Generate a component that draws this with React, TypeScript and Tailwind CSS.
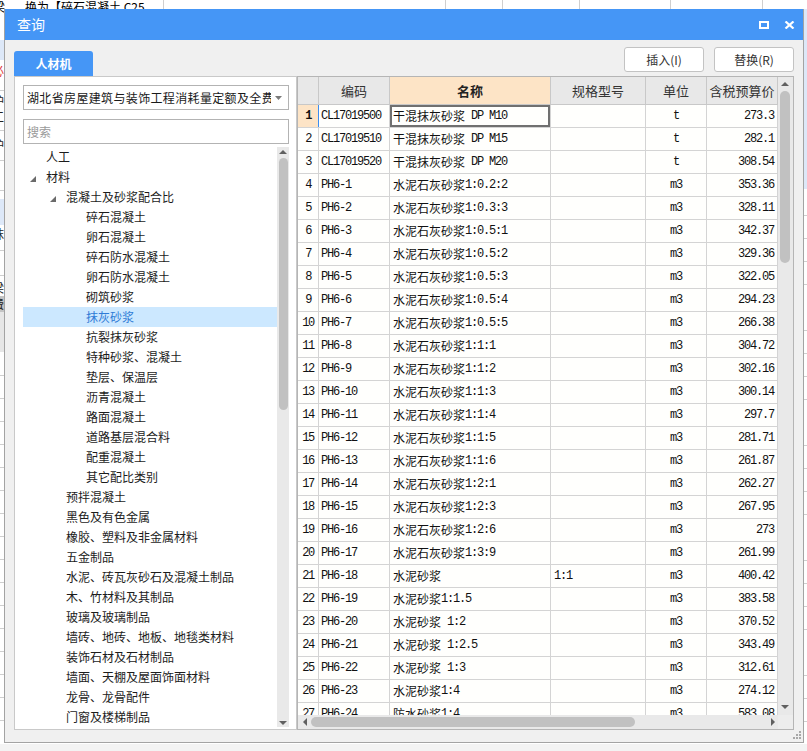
import React from "react";

const SANS = "font-['Noto_Sans_CJK_SC','Noto_Sans',sans-serif]";

const rows: [string, string, string, string, string][] = [
  ["CL17019500", "干混抹灰砂浆 DP M10", "", "t", "273.3"],
  ["CL17019510", "干混抹灰砂浆 DP M15", "", "t", "282.1"],
  ["CL17019520", "干混抹灰砂浆 DP M20", "", "t", "308.54"],
  ["PH6-1", "水泥石灰砂浆1:0.2:2", "", "m3", "353.36"],
  ["PH6-2", "水泥石灰砂浆1:0.3:3", "", "m3", "328.11"],
  ["PH6-3", "水泥石灰砂浆1:0.5:1", "", "m3", "342.37"],
  ["PH6-4", "水泥石灰砂浆1:0.5:2", "", "m3", "329.36"],
  ["PH6-5", "水泥石灰砂浆1:0.5:3", "", "m3", "322.05"],
  ["PH6-6", "水泥石灰砂浆1:0.5:4", "", "m3", "294.23"],
  ["PH6-7", "水泥石灰砂浆1:0.5:5", "", "m3", "266.38"],
  ["PH6-8", "水泥石灰砂浆1:1:1", "", "m3", "304.72"],
  ["PH6-9", "水泥石灰砂浆1:1:2", "", "m3", "302.16"],
  ["PH6-10", "水泥石灰砂浆1:1:3", "", "m3", "300.14"],
  ["PH6-11", "水泥石灰砂浆1:1:4", "", "m3", "297.7"],
  ["PH6-12", "水泥石灰砂浆1:1:5", "", "m3", "281.71"],
  ["PH6-13", "水泥石灰砂浆1:1:6", "", "m3", "261.87"],
  ["PH6-14", "水泥石灰砂浆1:2:1", "", "m3", "262.27"],
  ["PH6-15", "水泥石灰砂浆1:2:3", "", "m3", "267.95"],
  ["PH6-16", "水泥石灰砂浆1:2:6", "", "m3", "273"],
  ["PH6-17", "水泥石灰砂浆1:3:9", "", "m3", "261.99"],
  ["PH6-18", "水泥砂浆", "1:1", "m3", "400.42"],
  ["PH6-19", "水泥砂浆1:1.5", "", "m3", "383.58"],
  ["PH6-20", "水泥砂浆 1:2", "", "m3", "370.52"],
  ["PH6-21", "水泥砂浆 1:2.5", "", "m3", "343.49"],
  ["PH6-22", "水泥砂浆 1:3", "", "m3", "312.61"],
  ["PH6-23", "水泥砂浆1:4", "", "m3", "274.12"],
  ["PH6-24", "防水砂浆1:4", "", "m3", "583.08"],
];

const tree: [number, string, boolean][] = [
  [0, "人工", false],
  [0, "材料", true],
  [1, "混凝土及砂浆配合比", true],
  [2, "碎石混凝土", false],
  [2, "卵石混凝土", false],
  [2, "碎石防水混凝土", false],
  [2, "卵石防水混凝土", false],
  [2, "砌筑砂浆", false],
  [2, "抹灰砂浆", false],
  [2, "抗裂抹灰砂浆", false],
  [2, "特种砂浆、混凝土", false],
  [2, "垫层、保温层", false],
  [2, "沥青混凝土", false],
  [2, "路面混凝土", false],
  [2, "道路基层混合料", false],
  [2, "配重混凝土", false],
  [2, "其它配比类别", false],
  [1, "预拌混凝土", false],
  [1, "黑色及有色金属", false],
  [1, "橡胶、塑料及非金属材料", false],
  [1, "五金制品", false],
  [1, "水泥、砖瓦灰砂石及混凝土制品", false],
  [1, "木、竹材料及其制品", false],
  [1, "玻璃及玻璃制品", false],
  [1, "墙砖、地砖、地板、地毯类材料", false],
  [1, "装饰石材及石材制品", false],
  [1, "墙面、天棚及屋面饰面材料", false],
  [1, "龙骨、龙骨配件", false],
  [1, "门窗及楼梯制品", false],
];

function Mx({ t }: { t: string }) {
  const parts = t.split(/([\x00-\x7f]+)/).filter((s) => s.length > 0);
  return (
    <>
      {parts.map((s, i) =>
        /^[\x00-\x7f]+$/.test(s) ? (
          <span key={i} className="font-['Liberation_Mono',monospace] tracking-[-1.2px]">
            {s}
          </span>
        ) : (
          <span key={i}>{s}</span>
        )
      )}
    </>
  );
}

function Tri({ dir }: { dir: "up" | "down" | "left" | "right" }) {
  const pts =
    dir === "up"
      ? "0,4 4,0 8,4"
      : dir === "down"
      ? "0,0 8,0 4,4"
      : dir === "left"
      ? "4,0 4,8 0,4"
      : "0,0 0,8 4,4";
  const w = dir === "up" || dir === "down" ? 8 : 4;
  const h = dir === "up" || dir === "down" ? 4 : 8;
  return (
    <svg width={w} height={h} viewBox={`0 0 ${w} ${h}`} className="block">
      <polygon points={pts} fill="#606060" />
    </svg>
  );
}

function Backdrop() {
  const leftChars: [number, string, string][] = [
    [65, "必", "text-[#e03030]"],
    [95, "护", "text-[#222]"],
    [111, "工", "text-[#222]"],
    [139, "护", "text-[#222]"],
    [228, "抹", "text-[#222]"],
    [282, "梁", "text-[#222]"],
    [298, "费", "text-[#222]"],
  ];
  return (
    <div className="absolute inset-0 bg-white overflow-hidden">
      {/* top strip grid */}
      <div className="absolute left-0 top-0 w-full h-[9px]">
        {[163, 445, 502, 579, 670, 762].map((x) => (
          <div key={x} className="absolute top-0 h-[9px] w-px bg-[#cfcfcf]" style={{ left: x }} />
        ))}
        <div className={`absolute left-[-7px] top-[1px] text-[12px] leading-[12px] text-black ${SANS}`}>梁</div>
        <div className={`absolute left-[25px] top-[1px] text-[12px] leading-[12px] text-black whitespace-pre ${SANS}`}>
          换为【碎石混凝土 C25
        </div>
      </div>
      {/* left strip */}
      <div className="absolute left-0 top-[40px] w-[4px] h-[20px] bg-[#dde8f8]" />
      <div className="absolute left-0 top-[199px] w-[4px] h-[26px] bg-[#dde8f8]" />
      <div className="absolute left-0 top-[296px] w-[4px] h-[16px] bg-[#c4c4c4]" />
      <div className="absolute left-0 top-[312px] w-[4px] h-[40px] bg-[#e6e6e6]" />
      {leftChars.map(([y, c, col]) => (
        <div
          key={y}
          className={`absolute left-[-8px] text-[12px] leading-[12px] ${col} ${SANS}`}
          style={{ top: y }}
        >
          {c}
        </div>
      ))}
      {[90, 130, 160, 190, 250, 275, 375, 398, 421, 444, 467, 490, 513, 536, 559, 582, 605, 628, 651, 674, 697, 720].map((y) => (
        <div key={y} className="absolute left-0 w-[4px] h-px bg-[#cfcfcf]" style={{ top: y }} />
      ))}
      {/* right strip */}
      <div className="absolute right-0 top-[9px] w-[3px] h-[180px] bg-[#dde8f8]" />
      {[215, 238, 261, 284, 330, 353, 376, 399, 445, 468, 491, 514, 560, 583, 606, 629, 675, 698, 721].map((y) => (
        <div key={y} className="absolute right-0 w-[3px] h-px bg-[#cfcfcf]" style={{ top: y }} />
      ))}
      {/* bottom strip */}
      <div className="absolute left-0 top-[744px] w-full h-[7px] bg-[#f3f3f3]" />
    </div>
  );
}

function TreePanel() {
  return (
    <div className="w-[283px] h-[654px] border border-[#c9c9c9] bg-white pt-[8px] pl-[8px] pr-[7px] flex flex-col">
      <div className="h-[25px] w-[266px] border border-[#b3b3b3] bg-white flex items-center pl-[3px] pr-[6px]">
        <div className={`flex-1 overflow-hidden whitespace-nowrap text-[12px] tracking-[0.35px] text-[#1a1a1a] ${SANS}`}>
          湖北省房屋建筑与装饰工程消耗量定额及全费用基价表
        </div>
        <div className="ml-[4px]">
          <svg width="7" height="4" viewBox="0 0 7 4" className="block">
            <polygon points="0,0 7,0 3.5,4" fill="#7a7a7a" />
          </svg>
        </div>
      </div>
      <div className={`mt-[9px] h-[25px] w-[266px] border border-[#b3b3b3] bg-white flex items-center pl-[3px] text-[12px] text-[#9a9a9a] ${SANS}`}>
        搜索
      </div>
      <div className="mt-[3px] flex h-[580px]">
        <div className="w-[254px] flex flex-col">
          {tree.map(([lvl, text, arrow], i) => {
            const sel = text === "抹灰砂浆";
            return (
              <div
                key={i}
                className={`relative h-[20px] flex items-center text-[12px] whitespace-nowrap ${SANS} ${
                  sel ? "bg-[#cce8ff] text-[#2f7bd6]" : "text-[#1c1c1c]"
                }`}
                style={{ paddingLeft: 23 + lvl * 20 }}
              >
                {arrow && (
                  <svg
                    width="6"
                    height="6"
                    viewBox="0 0 6 6"
                    className="absolute top-[9px]"
                    style={{ left: 7 + lvl * 20 }}
                  >
                    <polygon points="6,0 6,6 0,6" fill="#6a6a6a" />
                  </svg>
                )}
                {text}
              </div>
            );
          })}
        </div>
        <div className="w-[12px] h-[580px] bg-[#e9e9e9] relative">
          <div className="absolute left-[2px] top-[3px]">
            <Tri dir="up" />
          </div>
          <div className="absolute left-[2px] top-[11px] w-[9px] h-[252px] rounded-full bg-[#c1c1c1]" />
          <div className="absolute left-[2px] top-[574px]">
            <Tri dir="down" />
          </div>
        </div>
      </div>
    </div>
  );
}

const W = ["w-[21px]", "w-[71px]", "w-[161px]", "w-[95px]", "w-[61px]", "w-[71px]"];

function DataTable() {
  return (
    <div className="w-[497px] h-[654px] border border-[#b5b5b5] bg-white flex flex-col">
      <div className="flex h-[638px]">
        <div className="w-[480px] h-[638px] flex flex-col overflow-hidden">
          {/* header */}
          <div className={`flex h-[28px] shrink-0 border-b border-[#c8c8c8] text-[13px] text-[#333] ${SANS}`}>
            <div className={`${W[0]} border-r border-[#c8c8c8] bg-[#e8e8e8]`} />
            <div className={`${W[1]} border-r border-[#c8c8c8] bg-[#e8e8e8] flex items-center justify-center`}>编码</div>
            <div className={`${W[2]} border-r border-[#c8c8c8] bg-[#fde4c6] flex items-center justify-center font-bold text-[#222]`}>名称</div>
            <div className={`${W[3]} border-r border-[#c8c8c8] bg-[#e8e8e8] flex items-center justify-center`}>规格型号</div>
            <div className={`${W[4]} border-r border-[#c8c8c8] bg-[#e8e8e8] flex items-center justify-center`}>单位</div>
            <div className={`${W[5]} border-r border-[#c8c8c8] bg-[#e8e8e8] flex items-center justify-center`}>含税预算价</div>
          </div>
          {rows.map((r, i) => {
            const first = i === 0;
            return (
              <div
                key={i}
                className={`flex h-[23px] shrink-0 border-b border-[#d4d4d4] bg-[#fffffd] text-[12px] text-[#111] ${SANS}`}
              >
                <div
                  className={`${W[0]} border-r flex items-center justify-center ${
                    first ? "bg-[#fde4c6] border-[#3d8ef0] font-bold" : "border-[#d4d4d4]"
                  }`}
                >
                  <span className="font-['Liberation_Mono',monospace] tracking-[-1.5px]">{i + 1}</span>
                </div>
                <div className={`${W[1]} border-r border-[#d4d4d4] flex items-center pl-[2px] whitespace-pre overflow-hidden`}>
                  <Mx t={r[0]} />
                </div>
                <div
                  className={`${W[2]} border-r border-[#d4d4d4] flex items-center pl-[3px] whitespace-pre overflow-hidden ${
                    first ? "shadow-[inset_0_0_0_2px_#707070]" : ""
                  }`}
                >
                  <Mx t={r[1]} />
                </div>
                <div className={`${W[3]} border-r border-[#d4d4d4] flex items-center pl-[3px] whitespace-pre`}>
                  <Mx t={r[2]} />
                </div>
                <div className={`${W[4]} border-r border-[#d4d4d4] flex items-center justify-center`}>
                  <Mx t={r[3]} />
                </div>
                <div className={`${W[5]} border-r border-[#d4d4d4] flex items-center justify-end pr-[3px]`}>
                  <Mx t={r[4]} />
                </div>
              </div>
            );
          })}
        </div>
        <div className="w-[15px] h-[638px] bg-[#e9e9e9] relative">
          <div className="absolute left-[3px] top-[5px]">
            <Tri dir="up" />
          </div>
          <div className="absolute left-[2px] top-[14px] w-[10px] h-[172px] rounded-full bg-[#c1c1c1]" />
          <div className="absolute left-[3px] top-[628px]">
            <Tri dir="down" />
          </div>
        </div>
      </div>
      <div className="flex h-[14px]">
        <div className="w-[480px] h-[14px] bg-[#e9e9e9] relative">
          <div className="absolute left-[5px] top-[3px]">
            <Tri dir="left" />
          </div>
          <div className="absolute left-[13px] top-[2px] w-[324px] h-[10px] rounded-full bg-[#c1c1c1]" />
          <div className="absolute left-[473px] top-[3px]">
            <Tri dir="right" />
          </div>
        </div>
        <div className="w-[15px] h-[14px] bg-[#ededed]" />
      </div>
    </div>
  );
}

function Grip() {
  const dots = [
    [6, 0],
    [3, 3],
    [6, 3],
    [0, 6],
    [3, 6],
    [6, 6],
  ];
  return (
    <svg width="8" height="8" viewBox="0 0 8 8" className="block">
      {dots.map(([x, y], i) => (
        <rect key={i} x={x} y={y} width="2" height="2" fill="#a8a8a8" />
      ))}
    </svg>
  );
}

export default function App() {
  return (
    <div className="relative w-[807px] h-[751px] overflow-hidden">
      <Backdrop />
      <div className="absolute left-[4px] top-[9px] w-[800px] h-[734px] bg-[#f0f0f0] border-x border-b border-[#a3a3a3] flex flex-col">
        {/* title bar */}
        <div className="h-[31px] shrink-0 bg-[#4596f6] flex items-center pl-[12px] pr-[8px]">
          <div className={`text-[14px] text-white ${SANS}`}>查询</div>
          <div className="ml-auto flex items-center gap-[15px]">
            <div className="w-[10px] h-[8px] border-[2px] border-white" />
            <svg width="11" height="8" viewBox="0 0 11 8" className="block">
              <line x1="1.5" y1="0.5" x2="9.5" y2="7.5" stroke="white" strokeWidth="2.2" />
              <line x1="9.5" y1="0.5" x2="1.5" y2="7.5" stroke="white" strokeWidth="2.2" />
            </svg>
          </div>
        </div>
        {/* top area */}
        <div className="h-[36px] shrink-0 flex px-[9px]">
          <div className={`mt-[11px] w-[79px] h-[25px] rounded-t-[3px] bg-[#4596f6] text-white text-[12px] font-bold flex items-center justify-center ${SANS}`}>
            人材机
          </div>
          <div className="ml-auto mt-[7px] flex gap-[10px] h-[25px]">
            <div className={`w-[80px] h-[25px] bg-white border border-[#c3c3c3] rounded-[3px] flex items-center justify-center text-[12px] text-[#333] ${SANS}`}>
              插入(I)
            </div>
            <div className={`w-[80px] h-[25px] bg-white border border-[#c3c3c3] rounded-[3px] flex items-center justify-center text-[12px] text-[#333] ${SANS}`}>
              替换(R)
            </div>
          </div>
        </div>
        {/* main */}
        <div className="flex px-[9px]">
          <TreePanel />
          <DataTable />
        </div>
        <div className="absolute left-[788px] top-[722px]">
          <Grip />
        </div>
      </div>
    </div>
  );
}
